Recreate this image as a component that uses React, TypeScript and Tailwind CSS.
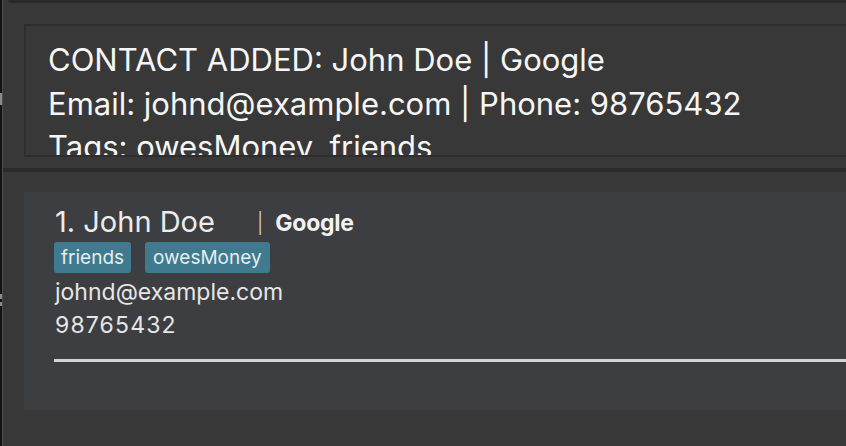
export default function App() {
  const font = { fontFamily: 'Inter, "Noto Sans", sans-serif' };
  return (
    <div className="w-[846px] h-[446px] bg-[#383838] flex overflow-hidden text-white" style={font}>
      <div className="w-[2px] bg-[#131313] shrink-0" />
      <div className="w-[1px] bg-[#4e4e4e] shrink-0 relative">
        <div className="absolute left-[-3px] top-[93px] w-[3px] h-[12px] bg-[#8a8a8a]" />
        <div className="absolute left-[-3px] top-[294px] w-[3px] h-[5px] bg-[#8a8a8a]" />
        <div className="absolute left-[-3px] top-[302px] w-[3px] h-[4px] bg-[#8a8a8a]" />
      </div>
      <div className="flex-1 flex flex-col min-w-0">
        <div className="h-[3px] ml-[5px] bg-[#2a2a2a] rounded-bl-[3px]" />
        <div className="ml-[21px] mt-[21px] h-[133px] border-2 border-r-0 border-[#2e2e2e] bg-[#383838] overflow-hidden pl-[22px] pt-[12px]">
          <div className="text-[31px] leading-[43.5px] text-[#f6f6f6] whitespace-nowrap">
            <div>CONTACT ADDED: John Doe | Google</div>
            <div>Email: johnd@example.com | Phone: 98765432</div>
            <div>Tags: owesMoney, friends</div>
          </div>
        </div>
        <div className="mt-[11px] h-[4px] bg-[#2b2b2b]" />
        <div className="ml-[21px] mt-[20px] h-[218px] bg-[#3d3e41] pl-[30px] pt-[13px] pr-0 flex flex-col">
          <div className="flex items-center h-[36px] leading-[36px] whitespace-nowrap">
            <span className="w-[203px] text-[29px] text-[#ececec] pl-[1px] relative top-[-1px]">1. John Doe</span>
            <span className="text-[20px] text-[#d8d8d8] font-light">|</span>
            <span className="ml-[12px] text-[23px] font-bold text-[#f2f2f2] tracking-[-0.01em]">Google</span>
          </div>
          <div className="flex gap-[14px] mt-[1px]">
            <span className="h-[31px] px-[7px] rounded-[3px] bg-[#3f7a8e] text-[19px] leading-[31px] text-[#e6eef0]">friends</span>
            <span className="h-[31px] px-[8px] rounded-[3px] bg-[#3f7a8e] text-[19px] leading-[31px] text-[#e6eef0]">owesMoney</span>
          </div>
          <div className="mt-[3px] text-[23px] leading-[33px] text-[#e6e6e6] pl-[1px]">johnd@example.com</div>
          <div className="text-[23px] leading-[33px] text-[#e6e6e6] tracking-[0.05em] pl-[1px]">98765432</div>
          <div className="mt-[17px] h-[3px] bg-[#d3d4d4]" />
        </div>
      </div>
    </div>
  );
}
